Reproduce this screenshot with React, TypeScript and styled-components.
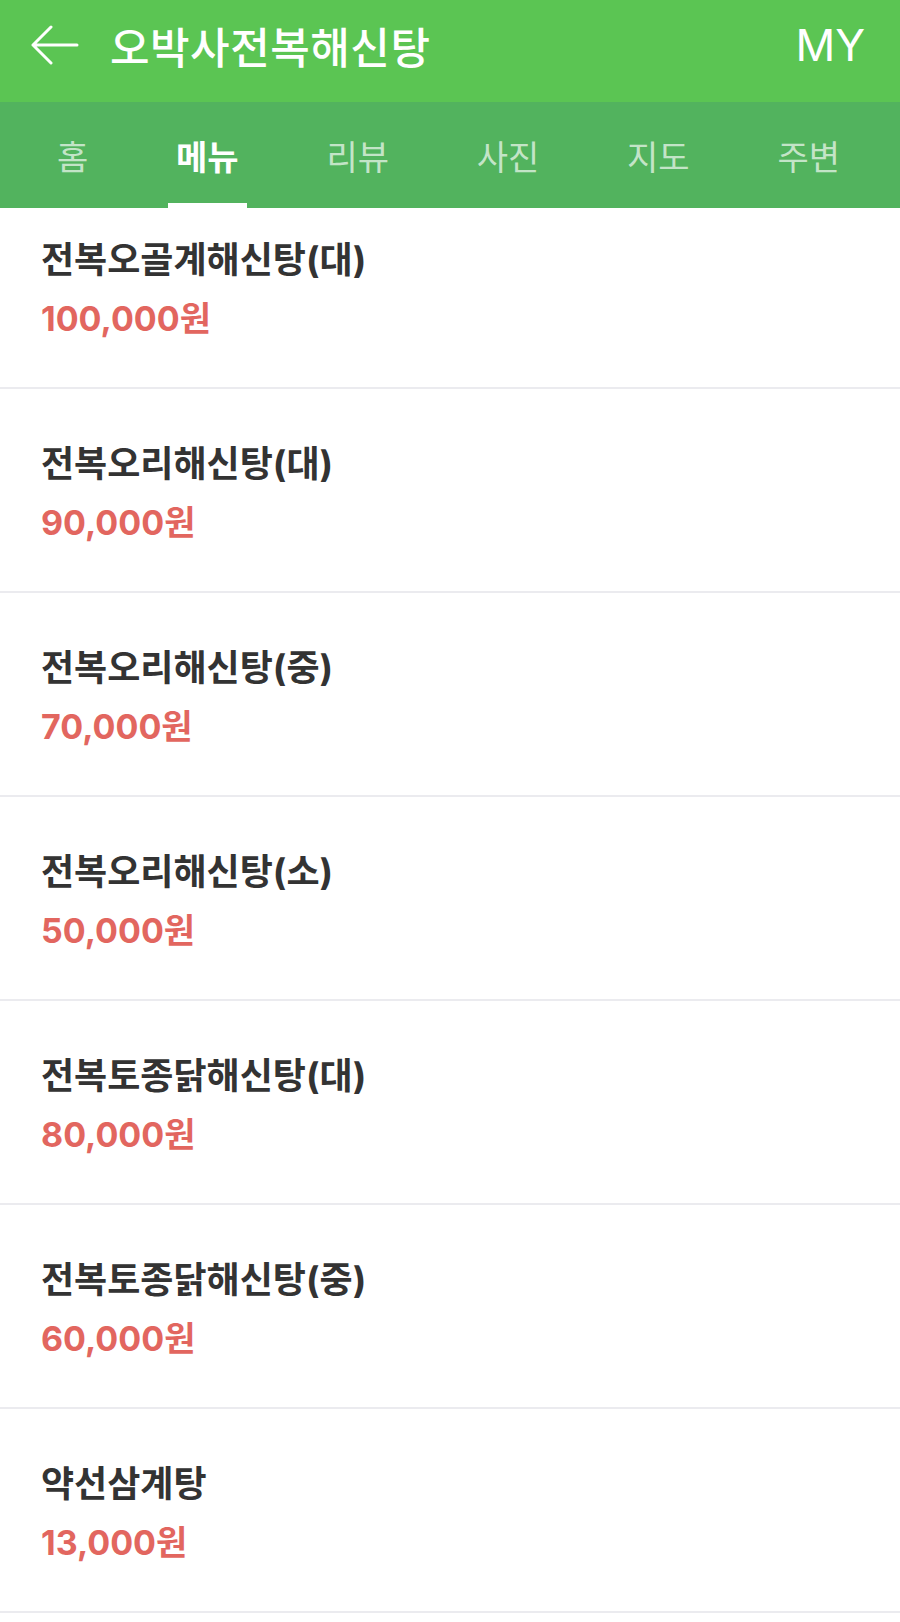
import styled, { createGlobalStyle } from "styled-components";

const GlobalStyle = createGlobalStyle`
  html, body {
    margin: 0;
    padding: 0;
    background: #ffffff;
  }
  body {
    font-family: Inter, "Noto Sans CJK KR", sans-serif;
  }
`;

const Page = styled.div`
  width: 900px;
  height: 1622px;
  overflow: hidden;
  background: #ffffff;
`;

const Top = styled.div`
  position: relative;
  z-index: 1;
`;

const Header = styled.header`
  height: 102px;
  box-sizing: border-box;
  padding: 0 35px 12px 30px;
  display: flex;
  align-items: center;
  background: #5bc553;
  color: #ffffff;
`;

const BackButton = styled.button`
  width: 50px;
  height: 40px;
  padding: 0;
  border: 0;
  background: none;
  display: flex;
  align-items: center;
`;

const Title = styled.h1`
  flex: 1;
  margin: 0 0 0 30px;
  font-size: 43px;
  font-weight: 500;
  letter-spacing: 0.5px;
`;

const MyLink = styled.span`
  font-family: Inter, "Noto Sans", sans-serif;
  font-size: 44px;
  font-weight: 400;
`;

const Tabs = styled.nav`
  height: 106px;
  box-sizing: border-box;
  padding: 0 52px 0 49px;
  display: flex;
  justify-content: space-between;
  background: #52b35e;
`;

const Tab = styled.div<{ $active?: boolean }>`
  height: 100%;
  box-sizing: border-box;
  padding: 5px 8px 0;
  display: flex;
  align-items: center;
  font-size: 34px;
  font-weight: ${(p) => (p.$active ? 700 : 400)};
  color: ${(p) => (p.$active ? "#ffffff" : "rgba(255, 255, 255, 0.68)")};
  border-bottom: 5px solid ${(p) => (p.$active ? "#ffffff" : "transparent")};
`;

const MenuList = styled.ul`
  list-style: none;
  margin: -23px 0 0;
  padding: 0;
`;

const MenuItem = styled.li`
  height: 204px;
  box-sizing: border-box;
  padding: 51px 41px 0;
  border-bottom: 2px solid #ebebef;
`;

const Name = styled.div`
  font-size: 36px;
  font-weight: 700;
  line-height: 48px;
  color: #333333;
`;

const Price = styled.div`
  margin-top: 11px;
  font-size: 34px;
  font-weight: 700;
  line-height: 48px;
  color: #e2665f;
`;

const tabs = ["홈", "메뉴", "리뷰", "사진", "지도", "주변"];

const menu = [
  { name: "전복오골계해신탕(대)", price: "100,000원" },
  { name: "전복오리해신탕(대)", price: "90,000원" },
  { name: "전복오리해신탕(중)", price: "70,000원" },
  { name: "전복오리해신탕(소)", price: "50,000원" },
  { name: "전복토종닭해신탕(대)", price: "80,000원" },
  { name: "전복토종닭해신탕(중)", price: "60,000원" },
  { name: "약선삼계탕", price: "13,000원" },
];

export default function App() {
  return (
    <Page>
      <GlobalStyle />
      <Top>
        <Header>
          <BackButton aria-label="뒤로">
            <svg width="50" height="40" viewBox="0 0 50 40" fill="none">
              <path
                d="M47 20H3M21 2L3 20l18 18"
                stroke="#ffffff"
                strokeWidth="3"
                strokeLinecap="round"
                strokeLinejoin="round"
              />
            </svg>
          </BackButton>
          <Title>오박사전복해신탕</Title>
          <MyLink>MY</MyLink>
        </Header>
        <Tabs>
          {tabs.map((t) => (
            <Tab key={t} $active={t === "메뉴"}>
              {t}
            </Tab>
          ))}
        </Tabs>
      </Top>
      <MenuList>
        {menu.map((m) => (
          <MenuItem key={m.name}>
            <Name>{m.name}</Name>
            <Price>{m.price}</Price>
          </MenuItem>
        ))}
      </MenuList>
    </Page>
  );
}
